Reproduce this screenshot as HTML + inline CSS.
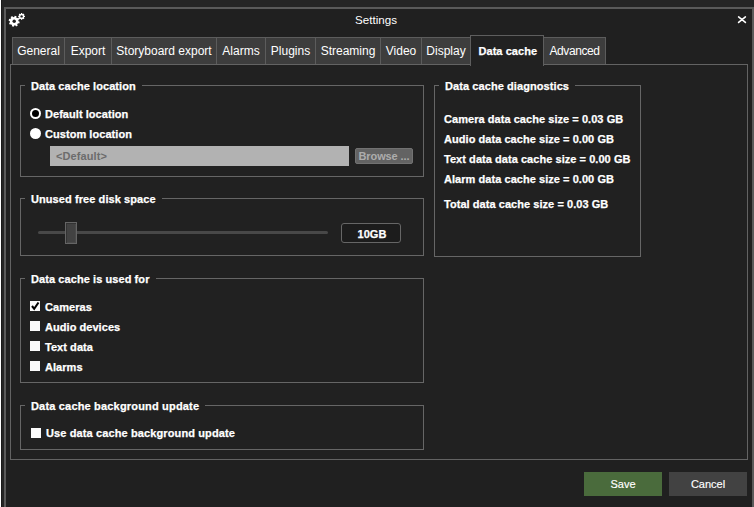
<!DOCTYPE html>
<html><head><meta charset="utf-8">
<style>
*{margin:0;padding:0;box-sizing:border-box}
html,body{width:754px;height:507px;overflow:hidden;background:#252525;font-family:"Liberation Sans",sans-serif;color:#fff}
.a{position:absolute}
.t11{position:absolute;font-size:11px;line-height:11px;font-weight:bold;white-space:nowrap;color:#fff;-webkit-text-stroke:0.25px #fff;letter-spacing:0.05px}
.t12{position:absolute;font-size:12px;line-height:12px;white-space:nowrap;color:#fff}
.grp{position:absolute;border:1px solid #666}
.gt{position:absolute;background:#212121;padding:0 6px 0 6px;font-size:11px;line-height:11px;font-weight:bold;white-space:nowrap;color:#fff;-webkit-text-stroke:0.25px #fff;letter-spacing:0.08px}
.tab{position:absolute;top:37px;height:28px;background:#3d3d3d;border:1px solid #5c5c5c;border-bottom:none}
.tab span{position:absolute;left:0;right:0;top:7px;text-align:center;font-size:12px;line-height:12px;color:#fff}
.cb{position:absolute;width:10px;height:10px;background:#fafafa}
</style></head><body>
<!-- left white column -->
<div class="a" style="left:0;top:0;width:1px;height:507px;background:#fff"></div>
<div class="a" style="left:1px;top:0;width:1px;height:507px;background:#1a1a1a"></div>
<!-- dialog -->
<div class="a" style="left:4px;top:7px;width:750px;height:520px;border:2px solid #5a5a5a;background:#202020"></div>
<!-- gear icon -->
<svg class="a" style="left:8px;top:11px" width="20" height="18" viewBox="0 0 20 18"><circle cx="6.2" cy="10.2" r="4.3" fill="#fff"/><rect x="5.2" y="4.699999999999999" width="2.0" height="5.5" fill="#fff" transform="rotate(15.0 6.2 10.2)"/><rect x="5.2" y="4.699999999999999" width="2.0" height="5.5" fill="#fff" transform="rotate(60.0 6.2 10.2)"/><rect x="5.2" y="4.699999999999999" width="2.0" height="5.5" fill="#fff" transform="rotate(105.0 6.2 10.2)"/><rect x="5.2" y="4.699999999999999" width="2.0" height="5.5" fill="#fff" transform="rotate(150.0 6.2 10.2)"/><rect x="5.2" y="4.699999999999999" width="2.0" height="5.5" fill="#fff" transform="rotate(195.0 6.2 10.2)"/><rect x="5.2" y="4.699999999999999" width="2.0" height="5.5" fill="#fff" transform="rotate(240.0 6.2 10.2)"/><rect x="5.2" y="4.699999999999999" width="2.0" height="5.5" fill="#fff" transform="rotate(285.0 6.2 10.2)"/><rect x="5.2" y="4.699999999999999" width="2.0" height="5.5" fill="#fff" transform="rotate(330.0 6.2 10.2)"/><circle cx="6.2" cy="10.2" r="1.7" fill="#1f1f1f"/><circle cx="13.6" cy="5.4" r="2.6" fill="#fff"/><rect x="12.95" y="2.0000000000000004" width="1.3" height="3.4" fill="#fff" transform="rotate(0.0 13.6 5.4)"/><rect x="12.95" y="2.0000000000000004" width="1.3" height="3.4" fill="#fff" transform="rotate(45.0 13.6 5.4)"/><rect x="12.95" y="2.0000000000000004" width="1.3" height="3.4" fill="#fff" transform="rotate(90.0 13.6 5.4)"/><rect x="12.95" y="2.0000000000000004" width="1.3" height="3.4" fill="#fff" transform="rotate(135.0 13.6 5.4)"/><rect x="12.95" y="2.0000000000000004" width="1.3" height="3.4" fill="#fff" transform="rotate(180.0 13.6 5.4)"/><rect x="12.95" y="2.0000000000000004" width="1.3" height="3.4" fill="#fff" transform="rotate(225.0 13.6 5.4)"/><rect x="12.95" y="2.0000000000000004" width="1.3" height="3.4" fill="#fff" transform="rotate(270.0 13.6 5.4)"/><rect x="12.95" y="2.0000000000000004" width="1.3" height="3.4" fill="#fff" transform="rotate(315.0 13.6 5.4)"/><circle cx="13.6" cy="5.4" r="1.2" fill="#1f1f1f"/></svg>
<div class="a" style="left:0;width:752px;text-align:center;top:14px;font-size:11.6px;line-height:11px;white-space:nowrap;color:#fff">Settings</div>
<!-- close -->
<svg class="a" style="left:737px;top:15px" width="10" height="9" viewBox="0 0 10 9"><path d="M1.6 1.9L8.4 7.4M8.4 1.9L1.6 7.4" stroke="#fff" stroke-width="1.6" stroke-linecap="round"/></svg>

<!-- tabs -->
<div class="tab" style="left:12px;width:53px"><span>General</span></div>
<div class="tab" style="left:64px;width:48px"><span>Export</span></div>
<div class="tab" style="left:111px;width:106px"><span>Storyboard export</span></div>
<div class="tab" style="left:216px;width:50px"><span>Alarms</span></div>
<div class="tab" style="left:265px;width:51px"><span>Plugins</span></div>
<div class="tab" style="left:315px;width:66px"><span>Streaming</span></div>
<div class="tab" style="left:380px;width:42px"><span>Video</span></div>
<div class="tab" style="left:421px;width:50px"><span>Display</span></div>
<div class="tab" style="left:543px;width:63px"><span style="letter-spacing:-0.4px">Advanced</span></div>

<!-- pane -->
<div class="a" style="left:10px;top:64px;width:738px;height:396px;border:1px solid #636363;background:#212121"></div>
<!-- selected tab -->
<div class="a" style="left:470px;top:35px;width:74px;height:31px;background:#212121;border:1px solid #5e5e5e;border-bottom:none"></div>
<div class="t11" style="left:478.5px;top:46px">Data cache</div>

<!-- group 1 -->
<div class="grp" style="left:20px;top:85px;width:404px;height:92px"></div>
<div class="gt" style="left:25px;top:81px">Data cache location</div>
<div class="a" style="left:30px;top:108px;width:11px;height:11px;border-radius:50%;background:#fff"></div>
<div class="a" style="left:32px;top:110px;width:7px;height:7px;border-radius:50%;background:#000"></div>
<div class="t11" style="left:45px;top:109px">Default location</div>
<div class="a" style="left:30px;top:128px;width:11px;height:11px;border-radius:50%;background:#fff"></div>
<div class="t11" style="left:45px;top:129px">Custom location</div>
<div class="a" style="left:50px;top:146px;width:299px;height:20px;background:#b2b2b2"></div>
<div class="a" style="left:56px;top:151px;font-size:11px;line-height:11px;font-weight:bold;color:#6c6c6c;white-space:nowrap;letter-spacing:0.1px">&lt;Default&gt;</div>
<div class="a" style="left:355px;top:148px;width:58px;height:16px;background:#636363;border:1px solid #727272;border-radius:2px"></div>
<div class="a" style="left:358.5px;top:151px;font-size:11px;line-height:11px;font-weight:bold;color:#adadad;white-space:nowrap;letter-spacing:-0.1px">Browse ...</div>

<!-- group 2 -->
<div class="grp" style="left:20px;top:198px;width:404px;height:58px"></div>
<div class="gt" style="left:25px;top:194px">Unused free disk space</div>
<div class="a" style="left:38px;top:231px;width:290px;height:3px;border-radius:1.5px;background:#484848"></div>
<div class="a" style="left:65px;top:222px;width:12px;height:22px;background:#424242;border:1px solid #656565;box-shadow:inset 1px 1px 0 #333,inset -1px -1px 0 #4a4a4a"></div>
<div class="a" style="left:341px;top:223px;width:60px;height:20px;border:1px solid #666;border-radius:3px;background:#1c1c1c"></div>
<div class="t11" style="left:342px;width:60px;text-align:center;top:229px">10GB</div>

<!-- group 3 -->
<div class="grp" style="left:20px;top:278px;width:404px;height:105px"></div>
<div class="gt" style="left:25px;top:274px">Data cache is used for</div>
<div class="cb" style="left:30px;top:301px"></div>
<svg class="a" style="left:30px;top:301px" width="10" height="10" viewBox="0 0 10 10"><path d="M2 5L4.2 7.8L8.5 1.5" stroke="#000" stroke-width="2.1" fill="none"/></svg>
<div class="t11" style="left:45px;top:302px">Cameras</div>
<div class="cb" style="left:30px;top:321px"></div>
<div class="t11" style="left:45px;top:322px">Audio devices</div>
<div class="cb" style="left:30px;top:341px"></div>
<div class="t11" style="left:45px;top:342px">Text data</div>
<div class="cb" style="left:30px;top:361px"></div>
<div class="t11" style="left:45px;top:362px">Alarms</div>

<!-- group 4 -->
<div class="grp" style="left:20px;top:405px;width:404px;height:45px"></div>
<div class="gt" style="left:25px;top:401px;letter-spacing:0.18px">Data cache background update</div>
<div class="cb" style="left:31px;top:428px"></div>
<div class="t11" style="left:46px;top:428px;letter-spacing:0.12px">Use data cache background update</div>

<!-- group 5 -->
<div class="grp" style="left:434px;top:85px;width:207px;height:172px"></div>
<div class="gt" style="left:439px;top:81px">Data cache diagnostics</div>
<div class="t11" style="left:444px;top:114px">Camera data cache size = 0.03 GB</div>
<div class="t11" style="left:444px;top:134px">Audio data cache size = 0.00 GB</div>
<div class="t11" style="left:444px;top:154px">Text data data cache size = 0.00 GB</div>
<div class="t11" style="left:444px;top:174px">Alarm data cache size = 0.00 GB</div>
<div class="t11" style="left:444px;top:199px">Total data cache size = 0.03 GB</div>

<!-- buttons -->
<div class="a" style="left:584px;top:472px;width:78px;height:24px;background:#4a6b3c"></div>
<div class="a" style="left:584px;width:78px;text-align:center;top:479px;font-size:11px;line-height:11px;color:#fff;-webkit-text-stroke:0.15px #fff">Save</div>
<div class="a" style="left:669px;top:472px;width:78px;height:24px;background:#424242"></div>
<div class="a" style="left:669px;width:78px;text-align:center;top:479px;font-size:11px;line-height:11px;color:#fff;-webkit-text-stroke:0.15px #fff">Cancel</div>
</body></html>
